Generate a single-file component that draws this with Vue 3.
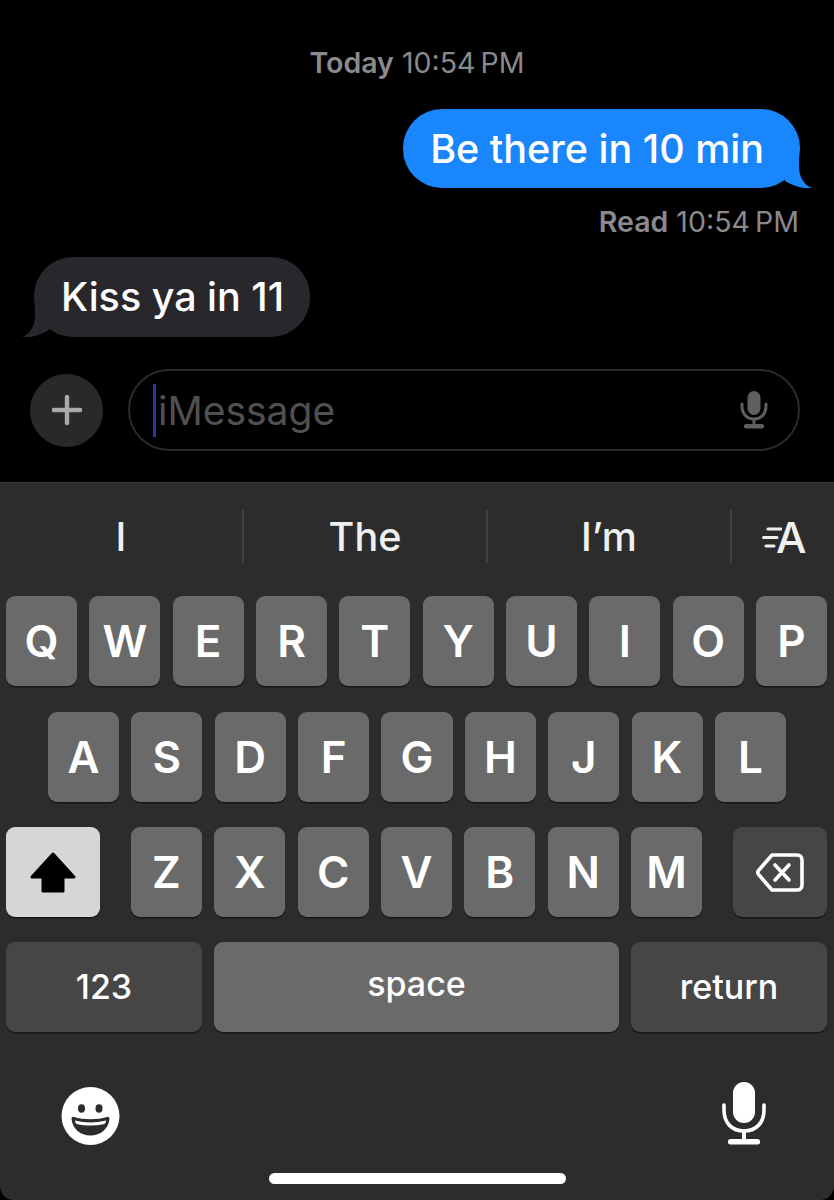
<script setup>
const rows = [
  ['Q', 'W', 'E', 'R', 'T', 'Y', 'U', 'I', 'O', 'P'],
  ['A', 'S', 'D', 'F', 'G', 'H', 'J', 'K', 'L'],
]
const thirdRow = ['Z', 'X', 'C', 'V', 'B', 'N', 'M']
const suggestions = ['I', 'The', 'I’m']
</script>

<template>
  <div class="screen">
    <section class="chat">
      <p class="stamp center"><b>Today</b> 10:54&#8201;PM</p>

      <div class="bubble sent">
        Be there in 10 min
        <svg class="tail tail-right" width="27" height="40" viewBox="0 0 27 40">
          <path d="M14 0V20C14.500 29 19 37 27 40C20 41 10 39 0 33V0Z" />
        </svg>
      </div>

      <p class="stamp right"><b>Read</b> 10:54&#8201;PM</p>

      <div class="bubble received">
        Kiss ya in 11
        <svg class="tail tail-left" width="27" height="40" viewBox="0 0 27 40">
          <path d="M14 0V20C14.500 29 19 37 27 40C20 41 10 39 0 33V0Z" />
        </svg>
      </div>

      <div class="composer">
        <div class="plus">
          <svg width="30" height="30" viewBox="0 0 30 30">
            <path d="M15 2V28M2 15H28" stroke="#a9a9a9" stroke-width="4.4" stroke-linecap="round" />
          </svg>
        </div>
        <div class="field">
          <span class="caret"></span>
          <span class="placeholder">iMessage</span>
          <svg class="field-mic" width="28" height="38" viewBox="0 0 28 38">
            <rect x="7.5" y="0" width="13" height="24" rx="6.5" fill="#5f5f5f" />
            <path d="M2 13V15C2 23 7 28 14 28C21 28 26 23 26 15V13" fill="none" stroke="#5f5f5f" stroke-width="3" stroke-linecap="round" />
            <path d="M14 28V34" stroke="#5f5f5f" stroke-width="3" />
            <rect x="4" y="33" width="20" height="4.5" rx="2" fill="#5f5f5f" />
          </svg>
        </div>
      </div>
    </section>

    <section class="keyboard">
      <div class="suggestions">
        <div v-for="word in suggestions" :key="word" class="suggestion">{{ word }}</div>
        <div class="text-effects">
          <svg class="lines" width="20" height="22" viewBox="0 0 20 22">
            <path d="M6 3H19M1.500 11.500H15M4 20H12" stroke="#efefef" stroke-width="3" stroke-linecap="round" />
          </svg>
          <span>A</span>
        </div>
      </div>

      <div class="keys">
        <div v-for="(row, i) in rows" :key="i" class="row" :class="{ inset: i === 1 }">
          <div v-for="k in row" :key="k" class="key">{{ k }}</div>
        </div>

        <div class="row between">
          <div class="key wide shift">
            <svg width="46" height="41" viewBox="0 0 46 41">
              <path d="M23 2L44 25H33V39H13V25H2Z" fill="#000" stroke="#000" stroke-width="3" stroke-linejoin="round" />
            </svg>
          </div>
          <div class="letters">
            <div v-for="k in thirdRow" :key="k" class="key">{{ k }}</div>
          </div>
          <div class="key wide dark">
            <svg width="48" height="41" viewBox="0 0 48 41">
              <path d="M16 3H41C44 3 46 5 46 8V33C46 36 44 38 41 38H16L3 23C1.500 21.500 1.500 19.500 3 18Z" fill="none" stroke="#fff" stroke-width="3.6" stroke-linejoin="round" />
              <path d="M19 13L33 28M33 13L19 28" stroke="#fff" stroke-width="3.600" stroke-linecap="round" />
            </svg>
          </div>
        </div>

        <div class="row bottom">
          <div class="key dark label num">123</div>
          <div class="key label space">space</div>
          <div class="key dark label num">return</div>
        </div>
      </div>

      <div class="tools">
        <svg width="60" height="60" viewBox="0 0 60 60">
          <circle cx="30.500" cy="30" r="29" fill="#fff" />
          <ellipse cx="21.500" cy="22.500" rx="3.500" ry="4.200" fill="#2c2c2c" />
          <ellipse cx="39" cy="22.500" rx="3.500" ry="4.200" fill="#2c2c2c" />
          <path d="M11.500 33C11.500 31.500 12.500 30.500 14 31C24 34 37 34 47 31C48.500 30.500 49.500 31.500 49.500 33C48.500 43 40.500 49.500 30.500 49.500C20.500 49.500 12.500 43 11.500 33Z" fill="#2c2c2c" />
          <path d="M15 34.500C25 37 36 37 46 34.500C46 36 45.500 37 44.500 38C35 40 26 40 16.500 38C15.500 37 15 36 15 34.500Z" fill="#fff" />
        </svg>
        <svg class="big-mic" width="44" height="63" viewBox="0 0 44 63">
          <rect x="11" y="0" width="22" height="41" rx="11" fill="#fff" />
          <path d="M2 23V28C2 41 10 49 22 49C34 49 42 41 42 28V23" fill="none" stroke="#fff" stroke-width="3.600" stroke-linecap="round" />
          <path d="M22 49V58" stroke="#fff" stroke-width="4" />
          <rect x="6" y="57" width="32" height="5.500" rx="2.500" fill="#fff" />
        </svg>
      </div>

      <div class="home-bar"></div>
    </section>
  </div>
</template>

<style scoped>
.screen {
  width: 834px;
  height: 1200px;
  background: #000;
  overflow: hidden;
  font-family: Inter, "Liberation Sans", sans-serif;
  color: #fff;
}

.chat {
  height: 482px;
  padding-top: 46px;
  box-sizing: border-box;
}

.stamp {
  margin: 0;
  font-size: 28.500px;
  line-height: 34px;
  color: #8a8a8e;
}
.stamp b {
  font-weight: 600;
}
.center {
  text-align: center;
}
.right {
  margin-top: 17px;
  padding-right: 35px;
  text-align: right;
}

.bubble {
  position: relative;
  width: fit-content;
  border-radius: 39px;
  font-size: 39.500px;
  font-weight: 450;
  line-height: 81px;
  height: 79px;
  box-sizing: border-box;
  white-space: nowrap;
}
.sent {
  margin: 29px 34px 0 auto;
  padding: 0 36px 0 27px;
  background: #1a86fb;
  fill: #1a86fb;
}
.received {
  margin: 18px 0 0 34px;
  padding: 0 26px 0 27px;
  height: 80px;
  background: #28282c;
  fill: #28282c;
}
.tail {
  position: absolute;
  bottom: 0;
}
.tail-right {
  right: -12px;
}
.tail-left {
  left: -12px;
  transform: scaleX(-1);
}

.composer {
  display: flex;
  align-items: center;
  gap: 25px;
  margin: 32px 34px 0 30px;
}
.plus {
  flex: none;
  width: 73px;
  height: 73px;
  border-radius: 50%;
  background: #29292b;
  display: flex;
  align-items: center;
  justify-content: center;
}
.field {
  flex: 1;
  height: 82px;
  box-sizing: border-box;
  border: 2px solid #2a2a2c;
  border-radius: 41px;
  display: flex;
  align-items: center;
  padding: 0 30px 0 23px;
}
.caret {
  flex: none;
  width: 3px;
  height: 53px;
  background: #233a96;
  margin-right: 2px;
}
.placeholder {
  flex: 1;
  font-size: 39px;
  color: #505052;
}
.field-mic {
  flex: none;
}

.keyboard {
  position: relative;
  height: 718px;
  box-sizing: border-box;
  background: #2c2c2c;
  border-top: 1px solid #3a3a3a;
  border-radius: 0 0 14px 14px;
}

.suggestions {
  display: grid;
  grid-template-columns: 244px 244px 244px 1fr;
  height: 113px;
  padding-top: 27px;
  box-sizing: border-box;
}
.suggestion {
  height: 53px;
  display: flex;
  align-items: center;
  justify-content: center;
  border-right: 2px solid #414141;
  box-sizing: border-box;
  font-size: 39.500px;
  font-weight: 500;
  color: #f0f0f0;
}
.text-effects {
  display: flex;
  align-items: center;
  justify-content: flex-start;
  height: 53px;
  padding-left: 30px;
  font-size: 43px;
  font-weight: 500;
  color: #f0f0f0;
}
.text-effects span {
  margin-left: -6px;
}

.keys {
  display: flex;
  flex-direction: column;
  gap: 25.500px;
  padding: 0 7px 0 6px;
}
.row {
  display: flex;
  gap: 12.300px;
}
.row.inset {
  padding: 0 41px 0 42px;
}
.row.between {
  justify-content: space-between;
}
.row.bottom {
  margin-top: -1px;
}
.letters {
  display: flex;
  gap: 12.500px;
  width: 571px;
}
.key {
  flex: 1;
  height: 90px;
  border-radius: 9px;
  background: #6a6a6a;
  box-shadow: 0 1.500px 0 #171717;
  display: flex;
  align-items: center;
  justify-content: center;
  font-size: 44px;
  font-weight: 600;
  color: #fff;
}
.key.wide {
  flex: none;
  width: 94px;
}
.key.shift {
  background: #d6d6d6;
}
.key.dark {
  background: #464646;
}
.label {
  font-size: 34px;
  font-weight: 500;
}
.num {
  flex: none;
  width: 196px;
}
.space {
  flex: 1;
  padding-bottom: 6px;
  box-sizing: border-box;
}

.tools {
  display: flex;
  justify-content: space-between;
  align-items: flex-start;
  padding: 54px 68px 0 60px;
}
.big-mic {
  margin-top: -4px;
}

.home-bar {
  position: absolute;
  left: 269px;
  bottom: 16px;
  width: 297px;
  height: 11px;
  border-radius: 6px;
  background: #fff;
}
</style>
